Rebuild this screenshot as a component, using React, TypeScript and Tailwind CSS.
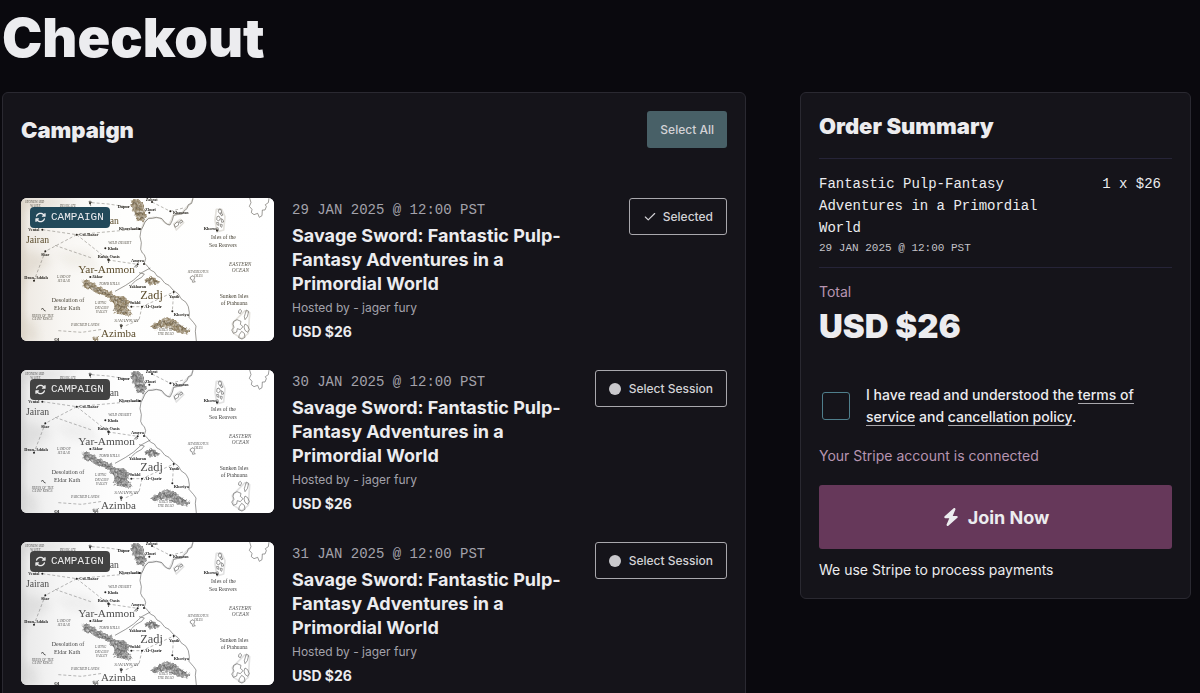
import React from "react";
import { Check } from "lucide-react";
import { FaArrowsRotate, FaBolt } from "react-icons/fa6";

type Session = { date: string; selected: boolean };

const sessions: Session[] = [
  { date: "29 JAN 2025 @ 12:00 PST", selected: true },
  { date: "30 JAN 2025 @ 12:00 PST", selected: false },
  { date: "31 JAN 2025 @ 12:00 PST", selected: false },
];

type Label = [x: number, y: number, size: number, text: string];

const regions: Label[] = [
  [33, 158, 29, "Jairan"],
  [190, 249, 34, "Yar-Ammon"],
  [376, 328, 37, "Zadj"],
  [258, 440, 33, "Azimba"],
  [284, 103, 29, "an"],
];

const places: Label[] = [
  [588, 147, 17, "Isles of the"],
  [582, 170, 17, "Sea Reavers"],
  [614, 323, 17, "Sunken Isles"],
  [617, 346, 17, "of Ptahuana"],
  [110, 335, 18, "Desolation of"],
  [117, 359, 18, "Eldar Kath"],
];

const italics: Label[] = [
  [642, 228, 16, "EASTERN"],
  [650, 246, 16, "OCEAN"],
  [298, 396, 15, "SAVANNAH"],
  [280, 163, 11, "WILD DESERT"],
  [126, 264, 10, "LAND OF"],
  [128, 276, 10, "SHALAR"],
  [252, 285, 11, "TOMB HILLS"],
  [518, 250, 10, "SILVERLOTUS"],
  [538, 262, 10, "ISLES"],
  [240, 343, 10, "LAYING"],
  [240, 356, 10, "DRAGON"],
  [242, 369, 10, "VALLEY"],
  [50, 380, 10, "RUINS OF THE"],
  [52, 391, 10, "GIANT KINGS"],
  [168, 409, 11, "PARCHED LANDS"],
  [30, 38, 10, "STONEWARD"],
  [46, 50, 10, "WASTE"],
  [134, 52, 10, "DESOLATE"],
  [432, 424, 10, "HILLS OF"],
  [428, 436, 10, "THE DEAD"],
];

const towns: Label[] = [
  [308, 54, 13, "Dapur"],
  [390, 62, 13, "Zhuri"],
  [474, 71, 12, "Khauran"],
  [566, 119, 13, "Kheru"],
  [312, 119, 13, "Khorshadin"],
  [193, 138, 13, "Col-Bazar"],
  [40, 122, 12, "Vental"],
  [278, 179, 12, "Khofa"],
  [248, 203, 13, "Rubis Oasis"],
  [78, 198, 12, "Shar"],
  [348, 215, 13, "Amyra"],
  [230, 265, 12, "Akkar"],
  [28, 268, 13, "Dran-Addah"],
  [342, 293, 12, "Yakharan"],
  [462, 324, 12, "Yanth"],
  [344, 341, 13, "Sukhl"],
  [388, 354, 14, "Al-Qarir"],
  [476, 378, 13, "Kheriya"],
  [392, 32, 12, "Zahrat"],
  [118, 453, 14, "Ol"],
];

const dots: [number, number][] = [
  [411, 36], [466, 64], [403, 68], [373, 117], [185, 134], [82, 119], [271, 175],
  [91, 184], [280, 210], [387, 222], [368, 223], [226, 261], [57, 272], [476, 306],
  [381, 350], [349, 350], [472, 364], [606, 121], [225, 39], [318, 408],
];

const peaks: [number, number][] = [
  [214, 282], [228, 290], [240, 297], [254, 302], [266, 309], [280, 315], [292, 321],
  [300, 332], [312, 326], [324, 334], [308, 346], [322, 352], [334, 346], [314, 362],
  [328, 368], [300, 358], [358, 40], [368, 54], [376, 70], [380, 84], [364, 72],
  [398, 274], [410, 268], [422, 276], [430, 404], [444, 396], [460, 400], [476, 398],
  [490, 406], [506, 416], [420, 412],
];

function MapLabels({ items }: { items: Label[] }) {
  return (
    <>
      {items.map(([x, y, size, text]) => (
        <text key={`${x}-${y}`} x={x} y={y} fontSize={size}>
          {text}
        </text>
      ))}
    </>
  );
}

function WorldMap({ id }: { id: string }) {
  const shade = `${id}-shade`;
  const rough = `${id}-rough`;
  const haze = `${id}-haze`;
  return (
    <svg viewBox="18 24 759 429" preserveAspectRatio="xMidYMid slice" className="block size-full" aria-hidden="true">
      <defs>
        <linearGradient id={shade} x1="0" y1="0" x2="1" y2="0">
          <stop offset="0" stopColor="#ddd6cb" />
          <stop offset="0.03" stopColor="#efebe5" />
          <stop offset="0.16" stopColor="#f8f6f3" />
          <stop offset="0.4" stopColor="#fefefd" />
          <stop offset="1" stopColor="#ffffff" />
        </linearGradient>
        <filter id={rough} x="-10%" y="-10%" width="120%" height="120%">
          <feTurbulence type="fractalNoise" baseFrequency="0.09" numOctaves="3" seed="4" result="edge" />
          <feDisplacementMap in="SourceGraphic" in2="edge" scale="14" xChannelSelector="R" yChannelSelector="G" result="shape" />
          <feTurbulence type="fractalNoise" baseFrequency="0.13" numOctaves="2" seed="9" />
          <feColorMatrix type="matrix" values="0 0 0 0 0  0 0 0 0 0  0 0 0 0 0  1.6 0 0 0 0.05" result="grain" />
          <feComposite in="shape" in2="grain" operator="in" />
        </filter>
        <filter id={haze}>
          <feGaussianBlur stdDeviation="12" />
        </filter>
      </defs>
      <rect x="18" y="24" width="759" height="429" fill={`url(#${shade})`} />
      <g filter={`url(#${haze})`} fill="#cfc5b4" opacity="0.35">
        <path d="M18 180 70 190 110 215 50 250 18 300Z" />
        <path d="M18 380 60 400 70 453H18Z" />
        <path d="M18 24H200L120 50 18 60Z" />
        <path d="M120 190 220 180 260 240 160 230Z" opacity="0.5" />
      </g>

      <g filter={`url(#${rough})`} fill="#95866a">
        <path d="M347 28 372 27 384 45 395 80 384 97 367 93 355 62 350 48Z" />
        <path d="M200 272 218 270 252 290 290 306 303 319 326 318 344 334 338 354 350 376 330 378 318 370 300 370 297 344 280 324 244 310 224 300 204 288Z" />
        <path d="M387 273 404 260 422 264 436 275 424 285 402 283Z" />
        <path d="M403 412 432 390 460 380 493 397 502 410 526 420 520 430 492 431 466 416 440 414 420 421Z" />
        <path d="M232 440 248 440 250 453H234Z" />
      </g>
      <g fill="none" stroke="#3c3527" strokeWidth="1.6" opacity="0.7">
        {peaks.map(([x, y]) => (
          <path key={`${x}-${y}`} d={`M${x - 6} ${y + 5}l5-9 3 4 2-2 4 8`} />
        ))}
      </g>

      <g fill="none" stroke="#c9c5bc" strokeWidth="5" strokeLinejoin="round" opacity="0.5">
        <path d="M379 118 387 97 398 86 416 82 435 84 450 98 462 104 470 88 474 76 500 70 512 54 526 42 534 26" />
        <path d="M604 58 620 58 630 80 626 120 606 126 600 90Z" />
        <path d="M476 102 496 88 506 98 484 120Z" />
        <path d="M652 400 690 362 704 368 700 430 680 446 656 430Z" />
      </g>
      <g fill="none" stroke="#55514a" strokeWidth="1.7" strokeLinejoin="round">
        <path d="M534 24 530 40 520 44 516 56 508 62 502 72 488 73 476 76 472 91 465 105 457 103 449 97 441 86 424 82 412 85 401 85 390 96 384 110 378 120 375 140 379 158 377 178 382 189 388 194 392 206 388 219 399 230 406 240 418 246 426 258 436 263 450 280 462 286 474 300 490 312 498 326 513 337 520 350 523 368 522 382 536 398 543 408 541 424 544 453" />
        <path d="M704 24 708 38 703 49 711 58 709 68 717 74 728 70 733 82 741 77 742 60 750 60 754 50 751 44 760 38 762 24" />
        <path d="M406 234 380 248 356 270 332 286 300 304" />
        <path d="M372 248 388 252 380 262 362 272 350 284" />
        <path d="M612 57l6 1 2 9-6 4-4-6zM606 80l6-2 4 8-5 7-6-4zM618 68l5 4-2 6-4-3zM618 86l6 3 2 7-6 1zM605 97l6 1 1 8-6-2zM617 102l5 2-2 8-4-3zM603 115l6-2 2 8-5 5z" />
        <path d="M478 104l8-8 6 1-2 9-10 6zM494 94l6-4 3 5-7 5z" />
        <path d="M526 261l8-4 5 6-3 8 5 4-8 2-2-8-5-2z" />
        <path d="M671 362l5-4 4 5-4 8-5-2zM694 360l7 4-4 16-7 9-2-9zM656 394l10-5 12 5-2 9 8 7-8 9-9-3-2 10-10 4-5-10 7-8-3-9zM690 402l8 5 5 12-5 8-8-6-3-10zM680 424l8 6 2 12-9 5-10-4 2-9z" />
      </g>
      <g fill="none" stroke="#77736a" strokeWidth="1.5" strokeDasharray="9 6">
        <path d="M230 38 280 42 346 52" />
        <path d="M411 36 466 64" />
        <path d="M82 119 185 134 260 127 373 117" />
        <path d="M185 134 91 184 57 272" />
        <path d="M185 134 248 184 280 210 368 223" />
        <path d="M120 166 160 180 230 204" />
        <path d="M349 350 381 350 416 334 476 306 472 364" />
        <path d="M381 350 372 390 330 408" />
        <path d="M130 422 200 427 262 418" />
        <path d="M466 64 505 54" />
      </g>
      <g fill="#231f18">
        {dots.map(([x, y]) => (
          <circle key={`${x}-${y}`} cx={x} cy={y} r="3" />
        ))}
      </g>
      <g fill="none" stroke="#231f18" strokeWidth="2">
        <path d="M221 35l5-2 4 4-5 4 2 6M276 208l6-2 3 5-5 4 1 4M358 232l6-7 4 3-5 5M314 405l6-2 3 5-5 3 1 6M78 358l6-3 3 6 5 2" />
      </g>

      <g className="font-['Liberation_Serif',serif]">
        <g fill="#5b4c2c">
          <MapLabels items={regions} />
        </g>
        <g fill="#4b4639">
          <MapLabels items={places} />
        </g>
        <g fill="#5c584e" fontStyle="italic">
          <MapLabels items={italics} />
        </g>
        <g fill="#1f1c16" fontWeight="700">
          <MapLabels items={towns} />
        </g>
      </g>
    </svg>
  );
}

function SessionRow({ session, index }: { session: Session; index: number }) {
  const { date, selected } = session;
  return (
    <li className="flex items-start gap-[18px]">
      <div
        className={`relative h-[143px] w-[253px] shrink-0 overflow-hidden rounded-md bg-white ${selected ? "" : "grayscale"}`}
      >
        <WorldMap id={`map-${index}`} />
        <span className="absolute top-[9px] left-[9px] flex h-[21px] items-center gap-[5px] rounded-sm bg-[#22495a] pr-[6px] pl-[5px] font-['Liberation_Mono',monospace] text-[11px] leading-[21px] text-[#ececef]">
          <FaArrowsRotate className="size-[11px]" />
          CAMPAIGN
        </span>
      </div>
      <div className="max-w-[280px] min-w-0 flex-1">
        <p className="font-['Liberation_Mono',monospace] text-[14px] leading-6 text-[#a3a2ab]">{date}</p>
        <h3 className="mt-[2px] text-[18px] leading-6 font-bold text-[#ececef]">
          Savage Sword: Fantastic Pulp-Fantasy Adventures in a Primordial World
        </h3>
        <p className="mt-[2px] text-[12px] leading-5 text-[#a3a2ab]">Hosted by - jager fury</p>
        <p className="mt-[2px] text-[14px] leading-6 font-bold text-[#ececef]">USD $26</p>
      </div>
      <button
        type="button"
        className="ml-auto flex h-[37px] shrink-0 items-center rounded-[3px] border border-[#a9a8ad] px-[13px] text-[12px] font-medium text-[#d3d2d6]"
      >
        {selected ? (
          <Check className="mr-[6px] size-[14px]" strokeWidth={2} />
        ) : (
          <span className="mr-2 size-3 rounded-full bg-[#c9c8cc]" />
        )}
        {selected ? "Selected" : "Select Session"}
      </button>
    </li>
  );
}

function OrderSummary() {
  return (
    <aside className="w-[391px] shrink-0 rounded-md border border-[#2a2931] bg-[#15141a] p-[18px]">
      <h2 className="text-[22px] leading-[30px] font-black">Order Summary</h2>
      <div className="mt-[17px] border-y border-[#262438] pt-[14px] pb-[10px] font-['Liberation_Mono',monospace]">
        <div className="flex items-start justify-between pr-[11px] text-[14px] leading-[22px]">
          <p className="w-[235px]">Fantastic Pulp-Fantasy Adventures in a Primordial World</p>
          <p>1 x $26</p>
        </div>
        <p className="text-[11px] leading-[18px] text-[#c3c2c8]">29 JAN 2025 @ 12:00 PST</p>
      </div>
      <p className="mt-[14px] text-[14px] leading-5 text-[#b795b1]">Total</p>
      <p className="mt-1 text-[33px] leading-10 font-black">USD $26</p>
      <div className="mt-[38px] flex items-center gap-4 pl-[3px]">
        <input
          id="terms"
          type="checkbox"
          className="size-7 shrink-0 appearance-none rounded-[3px] border border-[#4f7f8c] checked:bg-[#4f7f8c]"
        />
        <label htmlFor="terms" className="text-[14px] leading-[22px] font-medium">
          I have read and understood the{" "}
          <a href="#terms-of-service" className="border-b border-[#a9a8ad]">
            terms of service
          </a>{" "}
          and{" "}
          <a href="#cancellation-policy" className="border-b border-[#a9a8ad]">
            cancellation policy
          </a>
          .
        </label>
      </div>
      <p className="mt-[18px] text-[14px] leading-5 text-[#b795b1]">Your Stripe account is connected</p>
      <button
        type="button"
        className="mt-[19px] flex h-16 w-full items-center justify-center gap-2 rounded-[3px] bg-[#66385a] text-[18px] font-bold"
      >
        <FaBolt className="size-[18px]" />
        Join Now
      </button>
      <p className="mt-[11px] text-[14px] leading-5">We use Stripe to process payments</p>
    </aside>
  );
}

export default function App() {
  return (
    <main className="h-screen overflow-hidden bg-[#0a090e] pr-[9px] pl-[2px] font-['Inter',sans-serif] text-[#ececef]">
      <h1 className="pt-2 text-[54px] leading-[60px] font-black">Checkout</h1>
      <div className="mt-6 flex items-start gap-[54px]">
        <section className="min-w-0 flex-1 rounded-md border border-[#2a2931] bg-[#15141a] p-[18px]">
          <div className="flex items-center justify-between">
            <h2 className="text-[22px] leading-[30px] font-black">Campaign</h2>
            <button
              type="button"
              className="h-[37px] rounded-[3px] bg-[#486067] px-[13px] text-[12px] font-medium text-[#d3d2d6]"
            >
              Select All
            </button>
          </div>
          <ul className="mt-[50px] flex flex-col gap-[26px]">
            {sessions.map((session, index) => (
              <SessionRow key={session.date} session={session} index={index} />
            ))}
          </ul>
        </section>
        <OrderSummary />
      </div>
    </main>
  );
}
